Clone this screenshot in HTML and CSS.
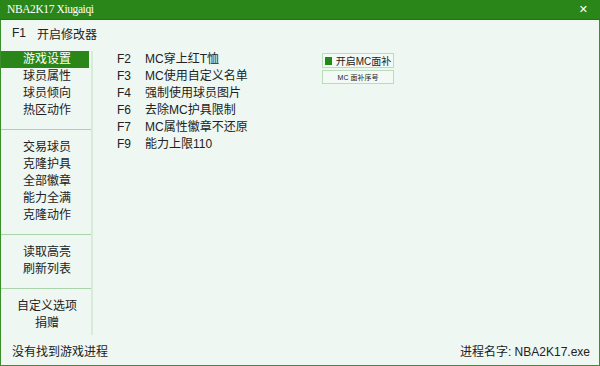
FILE: index.html
```html
<html>

<head>
    <title>NBA2K17 Xiugaiqi</title>
    <link rel="stylesheet" href="styles.css">
</head>

<body>
    <div class="window">
        <div class="titlebar">
            <span class="title">NBA2K17 Xiugaiqi</span>
            <span class="close">&#x2715;</span>
        </div>
        <div class="menu">
            <span class="key">F1</span>
            <span>开启修改器</span>
        </div>
        <div class="content">
            <ul class="sidebar">
                <li class="group">
                    <div class="item selected">游戏设置</div>
                    <div class="item">球员属性</div>
                    <div class="item">球员倾向</div>
                    <div class="item">热区动作</div>
                </li>
                <li class="group">
                    <div class="item">交易球员</div>
                    <div class="item">克隆护具</div>
                    <div class="item">全部徽章</div>
                    <div class="item">能力全满</div>
                    <div class="item">克隆动作</div>
                </li>
                <li class="group">
                    <div class="item">读取高亮</div>
                    <div class="item">刷新列表</div>
                </li>
                <li class="group">
                    <div class="item">自定义选项</div>
                    <div class="item">捐赠</div>
                </li>
            </ul>
            <div class="main">
                <ul class="hotkeys">
                    <li class="row"><span class="key">F2</span>MC穿上红T恤</li>
                    <li class="row"><span class="key">F3</span>MC使用自定义名单</li>
                    <li class="row"><span class="key">F4</span>强制使用球员图片</li>
                    <li class="row"><span class="key">F6</span>去除MC护具限制</li>
                    <li class="row"><span class="key">F7</span>MC属性徽章不还原</li>
                    <li class="row"><span class="key">F9</span>能力上限110</li>
                </ul>
                <div class="buttons">
                    <div class="btn btn-toggle"><span class="check"></span>开启MC面补</div>
                    <div class="btn btn-small">MC 面补序号</div>
                </div>
            </div>
        </div>
        <div class="statusbar">
            <span>没有找到游戏进程</span>
            <span>进程名字: NBA2K17.exe</span>
        </div>
    </div>
</body>

</html>
```

FILE: styles.css
```css
body {
    margin: 0;
    font-family: "Liberation Sans", "Noto Sans CJK SC", sans-serif;
    font-size: 12px;
    color: #222;
}

ul {
    margin: 0;
    padding: 0;
}

li {
    list-style: none;
}

.window {
    width: 600px;
    height: 366px;
    box-sizing: border-box;
    background: #eef7f2;
    border: 1px solid #3a8f2a;
    border-top: none;
    display: flex;
    flex-direction: column;
}

.titlebar {
    height: 20px;
    margin: 0 -1px;
    background: #2b8619;
    border-bottom: 1px solid #1f7611;
    box-sizing: border-box;
    display: flex;
    align-items: center;
    justify-content: space-between;
    padding: 0 12px 0 7px;
    color: #fff;
}

.title {
    font-family: "Liberation Serif", serif;
    font-size: 11.5px;
    letter-spacing: -0.4px;
}

.close {
    font-size: 11px;
    font-family: "DejaVu Sans", sans-serif;
}

.menu {
    height: 27px;
    display: flex;
    align-items: center;
    padding-left: 11px;
}

.menu .key {
    width: 25px;
}

.content {
    display: flex;
    flex: 1;
    padding-top: 5px;
}

.sidebar {
    width: 90px;
    height: 284px;
    border-right: 2px solid #d4ecd8;
}

.group {
    padding: 0 2px 0 0;
}

.group + .group {
    border-top: 1px solid #a9d3a9;
    margin-top: 10px;
    padding-top: 9px;
}

.item {
    height: 17px;
    line-height: 17px;
    text-align: center;
    padding-left: 4px;
}

.item.selected {
    background: #2b8619;
    color: #fff;
}

.main {
    display: flex;
    padding-left: 24px;
}

.hotkeys {
    width: 205px;
}

.row {
    height: 17px;
    line-height: 17px;
    display: flex;
}

.row .key {
    width: 28px;
}

.buttons {
    display: flex;
    flex-direction: column;
    gap: 2px;
    padding-top: 2px;
}

.btn {
    width: 72px;
    box-sizing: border-box;
    border: 1px solid #b9ddbb;
    background: #f3faf5;
    display: flex;
    align-items: center;
    justify-content: center;
}

.btn-toggle {
    height: 15px;
    font-size: 10px;
    gap: 4px;
}

.check {
    width: 7px;
    height: 8px;
    background: #1f8a14;
}

.btn-small {
    height: 14px;
    font-size: 7px;
}

.statusbar {
    height: 30px;
    display: flex;
    align-items: center;
    justify-content: space-between;
    padding: 0 9px 0 11px;
    margin-top: auto;
}
```
